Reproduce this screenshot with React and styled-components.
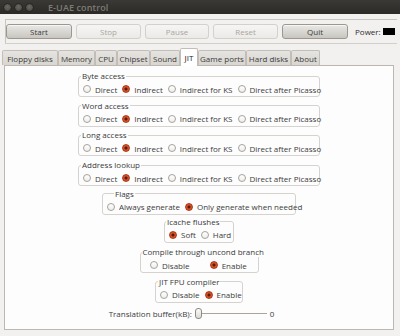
import React from "react";
import styled, { createGlobalStyle, css } from "styled-components";

const GlobalStyle = createGlobalStyle`
  html, body {
    margin: 0;
    padding: 0;
    background: #f2f1f0;
  }
  body {
    font-family: "Open Sans", "DejaVu Sans", sans-serif;
    font-size: 8px;
    color: #3c3c3c;
  }
`;

const Window = styled.div`
  width: 400px;
  height: 336px;
  display: flex;
  flex-direction: column;
  background: #f2f1f0;
  overflow: hidden;
`;

const TitleBar = styled.div`
  height: 14px;
  flex: none;
  display: flex;
  align-items: center;
  gap: 2px;
  padding-left: 3px;
  background: linear-gradient(#3a3935, #2b2a27);
`;

const WinButton = styled.span`
  width: 7px;
  height: 7px;
  border-radius: 50%;
  background: radial-gradient(circle at 50% 40%, #6a6863, #45443f);
  border: 1px solid #26251f;
`;

const Title = styled.span`
  margin-left: 12px;
  font-size: 9px;
  font-weight: 600;
  color: #7f7c76;
  letter-spacing: 0.1px;
`;

const Toolbar = styled.div`
  margin: 5px 3px 0 5px;
  height: 23px;
  flex: none;
  border-top: 1px solid #c9c5bf;
  border-bottom: 1px solid #d3d0ca;
  border-left: 1px solid #c9c5bf;
  display: flex;
  align-items: center;
  gap: 4px;
`;

const Button = styled.div`
  width: ${(p) => p.w}px;
  height: 15px;
  box-sizing: border-box;
  border-radius: 3px;
  display: flex;
  align-items: center;
  justify-content: center;
  font-size: 8px;
  ${(p) =>
    p.disabled
      ? css`
          border: 1px solid #d4d0ca;
          background: linear-gradient(#f6f5f4, #ebeae7);
          color: #aaa69f;
        `
      : css`
          border: 1px solid #9c988f;
          background: linear-gradient(#e9e8e5, #c9c6c0);
          color: #3c3c3c;
          box-shadow: inset 0 1px 0 #f7f6f4;
        `}
`;

const Power = styled.div`
  display: flex;
  align-items: center;
  margin-left: 3px;
  gap: 2px;
  font-size: 8px;
  color: #2e2e2e;
`;

const PowerLed = styled.span`
  width: 12px;
  height: 7px;
  background: #000;
`;

const TabStrip = styled.div`
  margin: 4px 0 0 2px;
  height: 17px;
  flex: none;
  display: flex;
  align-items: flex-end;
`;

const Tab = styled.div`
  width: ${(p) => p.w}px;
  box-sizing: border-box;
  display: flex;
  align-items: center;
  justify-content: center;
  font-size: 8px;
  white-space: nowrap;
  border: 1px solid #c2beb7;
  border-bottom: none;
  border-radius: 2px 2px 0 0;
  ${(p) =>
    p.active
      ? css`
          height: 18px;
          background: #ffffff;
          color: #222;
          position: relative;
          z-index: 1;
          margin-bottom: -1px;
        `
      : css`
          height: 15px;
          background: linear-gradient(#e6e4e0, #d9d6d1);
          color: #3a3a3a;
        `}
`;

const Panel = styled.div`
  margin: 0 6px 0 4px;
  height: 265px;
  flex: none;
  box-sizing: border-box;
  background: #fdfdfd;
  border: 1px solid #bcb8b1;
  display: flex;
  flex-direction: column;
  align-items: center;
  padding-top: 5px;
`;

const Frame = styled.fieldset`
  width: ${(p) => p.w}px;
  box-sizing: border-box;
  margin: ${(p) => p.gap}px 0 0 0;
  padding: 0 0 1px 0;
  border: 1px solid #d6d3ce;
  border-radius: 3px;
  min-width: 0;
`;

const Legend = styled.legend`
  margin-left: ${(p) => p.offset}px;
  padding: 0 1px;
  font-size: 8px;
  line-height: 10px;
  white-space: nowrap;
  color: #3a3a3a;
`;

const Row = styled.div`
  height: 12px;
  margin-top: 2px;
  display: flex;
  align-items: center;
  padding-left: ${(p) => p.pad}px;
  gap: ${(p) => p.spacing}px;
`;

const Item = styled.label`
  display: flex;
  align-items: center;
  gap: 4px;
  white-space: nowrap;
  ${(p) =>
    p.spread &&
    css`
      flex: 1;
      justify-content: center;
    `}
`;

const Radio = styled.span`
  width: 8px;
  height: 8px;
  box-sizing: border-box;
  border-radius: 50%;
  flex: none;
  ${(p) =>
    p.checked
      ? css`
          border: 1px solid #a8391a;
          background: radial-gradient(circle, #5a1a08 0 1.3px, #e0562b 1.8px, #c9421c 100%);
        `
      : css`
          border: 1px solid #a6a29b;
          background: linear-gradient(#ffffff, #eeedeb);
        `}
`;

const SliderRow = styled.div`
  margin-top: 4px;
  margin-right: 15px;
  display: flex;
  align-items: center;
  gap: 3px;
  height: 14px;
`;

const Track = styled.div`
  width: 72px;
  height: 12px;
  display: flex;
  align-items: center;
  background: linear-gradient(#a9a59e, #a9a59e) center / 100% 1px no-repeat;
`;

const Knob = styled.span`
  width: 7px;
  height: 11px;
  box-sizing: border-box;
  border: 1px solid #8e8a83;
  border-radius: 3px;
  background: linear-gradient(#fbfbfa, #dcdad6);
`;

const accessModes = ["Direct", "Indirect", "Indirect for KS", "Direct after Picasso"];

const AccessFrame = ({ title, gap }) => (
  <Frame w={242} gap={gap}>
    <Legend offset={2}>{title}</Legend>
    <Row pad={4} spacing={5}>
      {accessModes.map((m) => (
        <Item key={m}>
          <Radio checked={m === "Indirect"} />
          {m}
        </Item>
      ))}
    </Row>
  </Frame>
);

const tabs = [
  ["Floppy disks", 56],
  ["Memory", 37],
  ["CPU", 22],
  ["Chipset", 33],
  ["Sound", 30],
  ["JIT", 18],
  ["Game ports", 48],
  ["Hard disks", 45],
  ["About", 29],
];

export default function App() {
  return (
    <Window>
      <GlobalStyle />
      <TitleBar>
        <WinButton />
        <WinButton />
        <WinButton />
        <Title>E-UAE control</Title>
      </TitleBar>
      <Toolbar>
        <Button w={66}>Start</Button>
        <Button w={65} disabled>Stop</Button>
        <Button w={64} disabled>Pause</Button>
        <Button w={65} disabled>Reset</Button>
        <Button w={66}>Quit</Button>
        <Power>
          Power:
          <PowerLed />
        </Power>
      </Toolbar>
      <TabStrip>
        {tabs.map(([t, w]) => (
          <Tab key={t} w={w} active={t === "JIT"}>
            {t}
          </Tab>
        ))}
      </TabStrip>
      <Panel>
        <AccessFrame title="Byte access" gap={0} />
        <AccessFrame title="Word access" gap={3.6} />
        <AccessFrame title="Long access" gap={3.8} />
        <AccessFrame title="Address lookup" gap={3.8} />

        <Frame w={194} gap={2.5}>
          <Legend offset={11}>Flags</Legend>
          <Row pad={4} spacing={5}>
            <Item>
              <Radio />
              Always generate
            </Item>
            <Item>
              <Radio checked />
              Only generate when needed
            </Item>
          </Row>
        </Frame>

        <Frame w={70} gap={2}>
          <Legend offset={1}>Icache flushes</Legend>
          <Row pad={4} spacing={5}>
            <Item>
              <Radio checked />
              Soft
            </Item>
            <Item>
              <Radio />
              Hard
            </Item>
          </Row>
        </Frame>

        <Frame w={119} gap={4.5}>
          <Legend offset={1}>Compile through uncond branch</Legend>
          <Row pad={0} spacing={0}>
            <Item spread>
              <Radio />
              Disable
            </Item>
            <Item spread>
              <Radio checked />
              Enable
            </Item>
          </Row>
        </Frame>

        <Frame w={88} gap={3.5}>
          <Legend offset={2}>JIT FPU compiler</Legend>
          <Row pad={4} spacing={5}>
            <Item>
              <Radio />
              Disable
            </Item>
            <Item>
              <Radio checked />
              Enable
            </Item>
          </Row>
        </Frame>

        <SliderRow>
          <span>Translation buffer(kB):</span>
          <Track>
            <Knob />
          </Track>
          <span>0</span>
        </SliderRow>
      </Panel>
    </Window>
  );
}
